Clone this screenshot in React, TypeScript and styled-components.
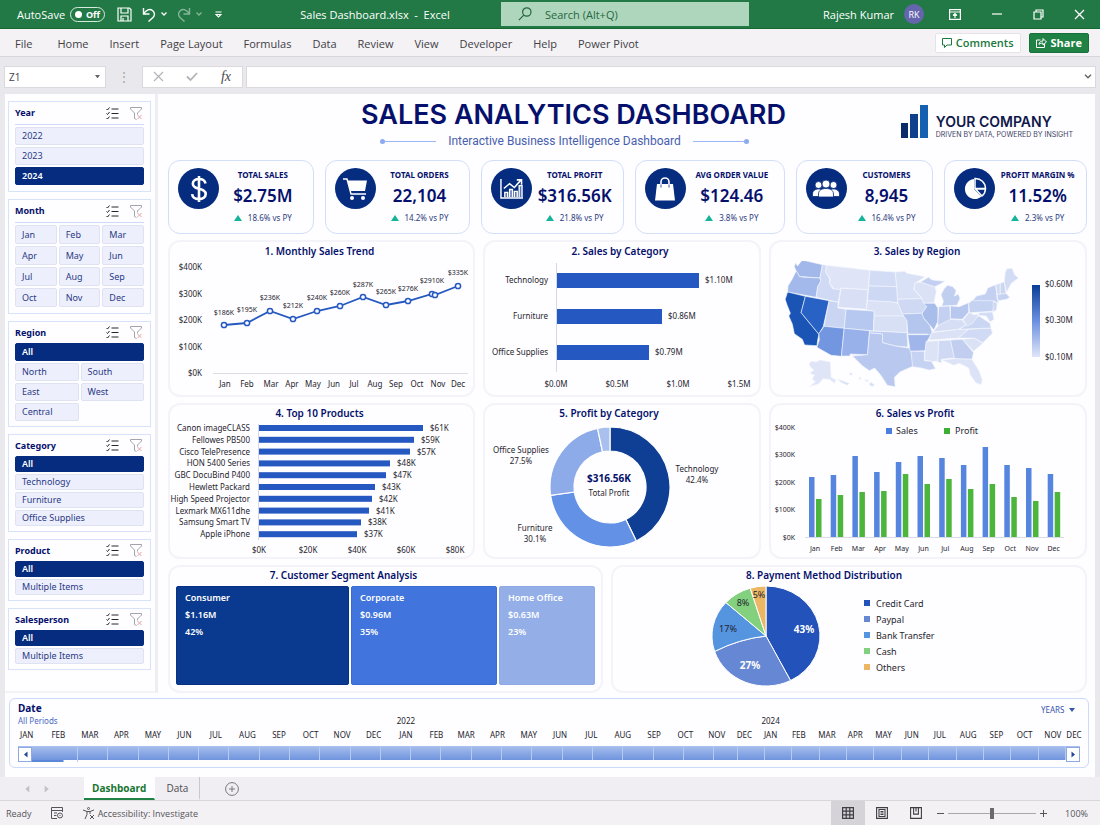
import React, { useState } from "react";
import styled, { createGlobalStyle } from "styled-components";

const uiFont = '"Open Sans", "Noto Sans", sans-serif';
const sheetFont = '"Noto Sans", "Open Sans", sans-serif';
const navy = "#04106b";
const deep = "#052c7e";
const blue = "#2558c0";

const Global = createGlobalStyle`
  * { box-sizing: border-box; }
  body { margin: 0; background: #e9e8ec; font-family: ${sheetFont}; color: #26262e; }
  button, input, select { font: inherit; color: inherit; margin: 0; }
  button { cursor: pointer; }
  svg { display: block; }
`;

const Window = styled.div`
  display: flex;
  flex-direction: column;
  min-height: 100vh;
  font-family: ${uiFont};
`;

/* ---------- title bar ---------- */

const TitleBar = styled.header`
  display: grid;
  grid-template-columns: 249fr 252fr 248fr 351fr;
  align-items: center;
  height: 29px;
  background: #227945;
  border-bottom: 1px solid #126a31;
  color: #fff;
  font-size: 11px;
`;

const QuickAccess = styled.div`
  display: flex;
  align-items: center;
  padding-left: 17px;
`;

const SwitchLabel = styled.label`
  display: flex;
  align-items: center;
  gap: 5px;
`;

const SwitchPill = styled.span`
  display: flex;
  align-items: center;
  justify-content: space-between;
  width: 35px;
  height: 15px;
  padding: 0 4px;
  border: 1px solid #d6ebdd;
  border-radius: 8px;
  font-size: 9px;
  font-weight: 700;
`;

const SwitchInput = styled.input`
  appearance: none;
  width: 7px;
  height: 7px;
  border-radius: 50%;
  background: #fff;
`;

const BarButton = styled.button<{ $gap?: number; $dim?: boolean }>`
  display: flex;
  padding: 0;
  margin-left: ${(p) => p.$gap ?? 0}px;
  border: 0;
  background: none;
  color: #fff;
  opacity: ${(p) => (p.$dim ? 0.45 : 1)};
`;

const FileName = styled.div`
  text-align: center;
  white-space: pre;
`;

const SearchBox = styled.label`
  display: flex;
  align-items: center;
  gap: 13px;
  height: 24px;
  padding-left: 17px;
  background: #aed6bc;
  color: #27663f;
`;

const SearchInput = styled.input`
  flex: 1;
  min-width: 0;
  padding: 0;
  border: 0;
  outline: 0;
  background: none;
  font-size: 11px;
  &::placeholder { color: #27663f; opacity: 1; }
`;

const WindowTools = styled.div`
  display: flex;
  align-items: center;
  justify-content: flex-end;
  padding-right: 15px;
`;

const Avatar = styled.span`
  display: flex;
  align-items: center;
  justify-content: center;
  width: 20px;
  height: 20px;
  margin-left: 10px;
  border-radius: 50%;
  background: #6565ae;
  font-size: 9px;
`;

/* ---------- ribbon and formula bar ---------- */

const Ribbon = styled.nav`
  display: flex;
  align-items: center;
  justify-content: space-between;
  height: 28px;
  padding: 0 11px 0 15px;
  background: #f4f2f5;
  border-bottom: 1px solid #d8d6da;
`;

const RibbonTabs = styled.div`
  display: flex;
  gap: 21px;
  padding-top: 2px;
`;

const RibbonTab = styled.button`
  padding: 0;
  border: 0;
  background: none;
  font-size: 11px;
  line-height: 16px;
  color: #414045;
  &:first-child { margin-right: 4px; }
`;

const RibbonActions = styled.div`
  display: flex;
  gap: 8px;
`;

const ActionButton = styled.button<{ $primary?: boolean }>`
  display: flex;
  align-items: center;
  gap: 4px;
  height: 20px;
  padding: 0 6px;
  border: 1px solid ${(p) => (p.$primary ? "#16713a" : "#e6e3e8")};
  border-radius: 2px;
  background: ${(p) => (p.$primary ? "#1f8144" : "#fff")};
  color: ${(p) => (p.$primary ? "#fff" : "#1a7a3c")};
  font-size: 11px;
  font-weight: ${(p) => (p.$primary ? 700 : 600)};
`;

const FormulaBar = styled.div`
  display: flex;
  align-items: center;
  height: 37px;
  padding: 2px 4px 0;
`;

const NameBox = styled.label`
  display: flex;
  align-items: center;
  width: 102px;
  height: 22px;
  padding: 0 5px 0 4px;
  border: 1px solid #dbd9de;
  background: #fff;
  color: #66656b;
`;

const NameInput = styled.input`
  flex: 1;
  min-width: 0;
  padding: 0;
  border: 0;
  outline: 0;
  background: none;
  font-size: 10px;
  color: #45444a;
`;

const Grip = styled.span`
  width: 36px;
  text-align: center;
  font-size: 12px;
  color: #a5a3a9;
`;

const FormulaTools = styled.div`
  display: flex;
  align-items: center;
  justify-content: space-between;
  width: 101px;
  height: 22px;
  padding: 0 11px 0 10px;
  border: 1px solid #dbd9de;
  background: #fff;
`;

const EntryButton = styled(BarButton)`
  color: #b4b2b8;
`;

const FxButton = styled(BarButton)`
  color: #4a494f;
  font-family: "Liberation Serif", serif;
  font-style: italic;
  font-size: 14px;
  line-height: 16px;
`;

const FormulaField = styled.label`
  display: flex;
  align-items: center;
  flex: 1;
  height: 22px;
  margin-left: 3px;
  padding-right: 3px;
  border: 1px solid #dbd9de;
  background: #fff;
  color: #66656b;
`;

/* ---------- sheet ---------- */

const Sheet = styled.main`
  flex: 1;
  margin: 0 5px;
  background: #fefdff;
  font-family: ${sheetFont};
`;

const SheetBody = styled.div`
  display: flex;
`;

const Slicers = styled.aside`
  display: flex;
  flex-direction: column;
  gap: 7px;
  flex: 0 0 153px;
  padding: 7px 4px 0 3px;
  border-right: 3px solid #eeedf2;
  border-bottom: 2px solid #f3f2f6;
`;

const SlicerCard = styled.section<{ $line?: boolean }>`
  padding: 0 6px ${(p) => (p.$line ? 6 : 5)}px;
  border: 1px solid #d9e2fb;
`;

const SlicerHead = styled.div<{ $line?: boolean }>`
  display: flex;
  align-items: center;
  gap: 11px;
  height: ${(p) => (p.$line ? 23 : 21)}px;
  margin-bottom: ${(p) => (p.$line ? 2 : 0)}px;
  padding-right: 2px;
  border-bottom: ${(p) => (p.$line ? "1px solid #cdd9f8" : "0")};
`;

const SlicerTitle = styled.h2`
  flex: 1;
  margin: 0;
  font-size: 9px;
  line-height: 14px;
  font-weight: 700;
  color: ${navy};
`;

const SlicerItems = styled.div<{ $cols: number }>`
  display: grid;
  grid-template-columns: repeat(${(p) => p.$cols}, 1fr);
  gap: 2px;
`;

const SlicerItem = styled.button<{ $on: boolean; $tall: number; $wide: boolean }>`
  height: ${(p) => p.$tall}px;
  grid-column: ${(p) => (p.$wide ? "1 / -1" : "auto")};
  padding: 0 0 0 6px;
  border: 1px solid ${(p) => (p.$on ? deep : "#dfe2f1")};
  border-radius: 2px;
  background: ${(p) => (p.$on ? deep : "#edf0fc")};
  color: ${(p) => (p.$on ? "#fff" : "#2b3a86")};
  font-size: 9px;
  line-height: 12px;
  font-weight: ${(p) => (p.$on ? 600 : 400)};
  text-align: left;
`;

const Dashboard = styled.div`
  flex: 1;
  min-width: 0;
  padding: 0 8px 0 10px;
`;

const DashHead = styled.div`
  display: flex;
  align-items: flex-start;
  justify-content: space-between;
  height: 66px;
  padding: 5px 14px 0 193px;
`;

const HeadTitles = styled.div`
  display: flex;
  flex-direction: column;
  align-items: center;
`;

const Title = styled.h1`
  margin: 0;
  font-family: Inter, ${sheetFont};
  font-size: 27px;
  line-height: 32px;
  font-weight: 600;
  color: ${navy};
  white-space: nowrap;
`;

const Subtitle = styled.p`
  display: flex;
  align-items: center;
  gap: 12px;
  margin: 2px 0 0;
  padding-right: 18px;
  font-family: Roboto, ${sheetFont};
  font-size: 12px;
  line-height: 16px;
  color: #4660ad;
  white-space: nowrap;
`;

const Flourish = styled.span<{ $end?: boolean }>`
  display: flex;
  flex-direction: ${(p) => (p.$end ? "row-reverse" : "row")};
  align-items: center;
  width: 56px;
  &::before { content: ""; width: 5px; height: 5px; border-radius: 50%; background: #8caaf0; }
  &::after { content: ""; flex: 1; height: 1px; background: #9bb6f4; }
`;

const Brand = styled.div`
  display: flex;
  gap: 8px;
  padding-top: 6px;
`;

const BrandName = styled.div`
  padding-top: 9px;
  font-family: Inter, ${sheetFont};
  font-size: 14px;
  line-height: 16px;
  font-weight: 600;
  color: #10184a;
  white-space: nowrap;
`;

const BrandLine = styled.div`
  font-size: 7px;
  line-height: 10px;
  font-weight: 400;
  color: #3b3f63;
`;

const KpiRow = styled.div`
  display: grid;
  grid-template-columns: 146fr 146fr 143fr 150fr 138fr 143fr;
  gap: 11px;
  margin-bottom: 6px;
`;

const KpiCard = styled.section`
  display: flex;
  height: 74px;
  padding: 7px 6px 0 9px;
  border: 1px solid #d3dff8;
  border-radius: 12px;
`;

const KpiIcon = styled.div`
  display: flex;
  align-items: center;
  justify-content: center;
  flex: 0 0 41px;
  height: 41px;
  border-radius: 50%;
  background: ${deep};
  color: #fff;
`;

const KpiText = styled.div`
  display: flex;
  flex-direction: column;
  align-items: center;
  flex: 1;
  white-space: nowrap;
`;

const KpiLabel = styled.h3`
  margin: 1px 0 0;
  font-size: 8px;
  line-height: 12px;
  font-weight: 700;
  color: ${navy};
`;

const KpiValue = styled.div`
  margin-top: 4px;
  font-size: 17px;
  line-height: 22px;
  font-weight: 600;
  color: ${navy};
`;

const KpiDelta = styled.div`
  display: flex;
  align-items: center;
  gap: 6px;
  margin-top: 5px;
  font-size: 8px;
  line-height: 12px;
  color: #2c3c80;
  &::before {
    content: "";
    border: 4px solid transparent;
    border-top: 0;
    border-bottom: 6px solid #14b39a;
  }
`;

const PanelRow = styled.div<{ $cols: string }>`
  display: grid;
  grid-template-columns: ${(p) => p.$cols};
  gap: 8px;
  margin-bottom: 6px;
  &:last-child { margin-bottom: 0; }
`;

const PanelBox = styled.section`
  min-width: 0;
  border: 2px solid #f4f3f9;
  border-radius: 12px;
`;

const PanelTitle = styled.h2<{ $tall: number; $shift: number }>`
  margin: 0;
  padding-right: ${(p) => p.$shift}px;
  font-size: 10px;
  line-height: ${(p) => p.$tall}px;
  font-weight: 600;
  color: ${navy};
  text-align: center;
`;

const Chart = styled.svg`
  width: 100%;
  height: auto;
  font-family: ${sheetFont};
`;

const Tiles = styled.div`
  display: grid;
  grid-template-columns: 173fr 146fr 96fr;
  gap: 2px;
  height: 99px;
  margin: 2px 6px 6px;
`;

const Tile = styled.div<{ $fill: string; $edge: string }>`
  padding: 2px 8px;
  border: 1px solid ${(p) => p.$edge};
  border-radius: 2px;
  background: ${(p) => p.$fill};
  color: #fff;
  font-size: 9px;
  line-height: 17px;
  font-weight: 600;
`;

const PieArea = styled.div`
  display: flex;
  align-items: center;
  gap: 43px;
  padding-left: 98px;
`;

const Pie = styled.svg`
  flex: 0 0 110px;
  height: 104px;
  font-family: ${sheetFont};
`;

const Legend = styled.ul`
  margin: 0;
  padding: 0 0 2px;
  list-style: none;
`;

const LegendItem = styled.li<{ $color: string }>`
  display: flex;
  align-items: center;
  gap: 6px;
  height: 16px;
  font-size: 9px;
  &::before { content: ""; width: 6px; height: 6px; background: ${(p) => p.$color}; }
`;

/* ---------- timeline ---------- */

const Timeline = styled.section`
  display: flex;
  flex-direction: column;
  height: 70px;
  margin: 5px 6px 9px 4px;
  padding: 3px 8px 0;
  border: 1px solid #cbdaf8;
  border-radius: 6px;
`;

const TimelineHead = styled.div`
  display: flex;
  justify-content: space-between;
  align-items: center;
  height: 12px;
  padding-right: 5px;
`;

const TimelineTitle = styled.h2`
  margin: 0;
  font-size: 10px;
  line-height: 12px;
  font-weight: 700;
  color: ${navy};
`;

const LevelPicker = styled.label`
  display: flex;
  align-items: center;
  gap: 4px;
  padding-top: 3px;
  color: #3655ae;
`;

const LevelSelect = styled.select`
  appearance: none;
  padding: 0;
  border: 0;
  background: none;
  font-size: 8px;
  line-height: 12px;
`;

const MonthGrid = styled.div`
  display: grid;
  grid-template-columns: repeat(12, 315fr) 330fr 280fr repeat(9, 313fr) 240fr repeat(11, 282fr) 140fr;
  margin: 0 -1px 0 -7px;
  font-size: 8px;
  line-height: 13px;
  color: #24242c;
`;

const Period = styled.span`
  grid-column: 1 / 4;
  padding-left: 7px;
  color: #4a6bc4;
`;

const Cell = styled.span<{ $col?: number }>`
  display: flex;
  justify-content: center;
  min-width: 0;
  ${(p) => (p.$col ? `grid-column: ${p.$col}; grid-row: 1;` : "")}
`;

const MonthRow = styled(MonthGrid)`
  margin-top: 1px;
`;

const Track = styled.div`
  display: flex;
  height: 16px;
  margin-top: 5px;
  border-top: 1px solid #a9c0ee;
`;

const TrackArrow = styled.button`
  display: flex;
  align-items: center;
  justify-content: center;
  width: 14px;
  padding: 0;
  border: 1px solid #8ea8e0;
  background: #fff;
  color: #2146a0;
`;

const TrackCells = styled.div`
  display: grid;
  grid-template-columns: 47fr repeat(21, 31fr) 24fr repeat(12, 28fr);
  flex: 1;
`;

const TrackCell = styled.span`
  height: 13px;
  border-right: 1px solid #b7caf1;
  background: linear-gradient(#a4bbec, #6f94dd);
  &:first-child {
    height: 15px;
    background:
      linear-gradient(#5c86d8, #5c86d8) left bottom / 70% 2px no-repeat,
      linear-gradient(#a4bbec, #6f94dd) top / 100% 13px no-repeat;
  }
`;

/* ---------- sheet tabs and status bar ---------- */

const TabBar = styled.nav`
  display: flex;
  height: 24px;
  border-bottom: 1px solid #d9d7db;
  background: #f0eef2;
  color: #56555b;
`;

const TabArrows = styled.div`
  display: flex;
  align-items: center;
  gap: 14px;
  width: 84px;
  padding-left: 24px;
  color: #c3c1c7;
`;

const SheetTab = styled.button<{ $on?: boolean }>`
  padding: 0 ${(p) => (p.$on ? 8 : 11)}px;
  border: 0;
  border-bottom: 2px solid ${(p) => (p.$on ? "#1f8144" : "transparent")};
  border-right: 1px solid ${(p) => (p.$on ? "transparent" : "#c9c7cc")};
  background: ${(p) => (p.$on ? "#fefdff" : "none")};
  color: ${(p) => (p.$on ? "#15752f" : "#4c4b51")};
  font-size: 10px;
  font-weight: ${(p) => (p.$on ? 700 : 400)};
`;

const AddButton = styled(BarButton)`
  align-items: center;
  color: #77767c;
`;

const StatusBar = styled.footer`
  display: flex;
  align-items: center;
  height: 24px;
  padding: 0 12px 0 6px;
  background: #f3f1f4;
  color: #55545a;
  font-size: 9px;
`;

const StatusGroup = styled.div<{ $gap: number }>`
  display: flex;
  align-items: center;
  gap: ${(p) => p.$gap}px;
`;

const Spacer = styled.div`
  flex: 1;
`;

const ViewButton = styled.button<{ $on?: boolean }>`
  display: flex;
  align-items: center;
  justify-content: center;
  width: 34px;
  height: 24px;
  padding: 0;
  border: 0;
  background: ${(p) => (p.$on ? "#d5d3d7" : "none")};
  color: #3f3e44;
`;

const ZoomGroup = styled(StatusGroup)`
  margin-left: 4px;
`;

const ZoomSlider = styled.input`
  appearance: none;
  width: 88px;
  height: 12px;
  background: linear-gradient(#a9a7ad, #a9a7ad) center / 100% 1px no-repeat;
  &::-webkit-slider-thumb {
    appearance: none;
    width: 4px;
    height: 11px;
    background: #6a696f;
  }
`;

const ZoomText = styled.span`
  margin-left: 18px;
`;

/* ---------- icons ---------- */

const Stroke = ({ w, h, d, sw = 1 }: { w: number; h: number; d: string; sw?: number }) => (
  <svg width={w} height={h} viewBox={`0 0 ${w} ${h}`} fill="none" stroke="currentColor" strokeWidth={sw} aria-hidden>
    <path d={d} />
  </svg>
);

const CaretDown = ({ size = 6 }: { size?: number }) => (
  <svg width={size} height={size / 2 + 1} viewBox="0 0 6 4" fill="currentColor" aria-hidden>
    <path d="M0 0h6L3 4z" />
  </svg>
);

const ArrowHead = ({ left, size = 5 }: { left?: boolean; size?: number }) => (
  <svg width={size} height={size + 2} viewBox="0 0 5 7" fill="currentColor" aria-hidden>
    <path d={left ? "M4.500 0.500v6L1 3.500z" : "M.5.5v6L4 3.500z"} />
  </svg>
);

const MultiIcon = () => (
  <Stroke w={13} h={13} d="M0.500 2l1 1 2-2.500M.5 6.500l1 1 2-2.500M.5 11l1 1 2-2.500M5.500 2h7M5.500 6.500h7M5.500 11h7" />
);

const ClearIcon = () => (
  <svg width="12" height="13" viewBox="0 0 12 13" fill="none" strokeWidth="1" aria-hidden>
    <path d="M.5.5h11v1.500L7.500 6v1.500M.5.5V2l4 4v5.500l2 1" stroke="#a4a3ab" />
    <path d="M7.500 8l4 4M11.500 8l-4 4" stroke="#e5a3a3" />
  </svg>
);

const kpiIcons: Record<string, React.ReactNode> = {
  dollar: (
    <svg width="20" height="30" viewBox="0 0 20 30" fill="none" stroke="currentColor" strokeWidth="2.600" aria-hidden>
      <path d="M16.500 9.500C16 6.500 13.500 5 10 5S3.800 6.700 3.800 9.700c0 6.800 12.900 3.500 12.900 10.400 0 3.200-2.900 5-6.700 5s-6.500-1.800-6.900-5M10 2v26" />
    </svg>
  ),
  cart: (
    <svg width="26" height="24" viewBox="0 0 26 24" aria-hidden>
      <path d="M1 2h4l4 15h15" fill="none" stroke="currentColor" strokeWidth="1.400" />
      <path d="M5.500 3.500H25L23 14H8.500z" fill="currentColor" />
      <circle cx="10" cy="21" r="2" fill="currentColor" />
      <circle cx="21" cy="21" r="2" fill="currentColor" />
    </svg>
  ),
  chart: (
    <svg width="25" height="23" viewBox="0 0 26 24" fill="none" stroke="currentColor" aria-hidden>
      <path d="M2 2v20h23" strokeWidth="1.500" />
      <path d="M6 21v-5h3v5M11 21v-8h3v8M16 21v-6h3v6M21 21V9h3v12" strokeWidth="1.400" fill="currentColor" fillOpacity="0.350" />
      <path d="M5 12l6-5 5 4 7-8M18.500 3H23.500v5" strokeWidth="1.600" />
    </svg>
  ),
  bag: (
    <svg width="22" height="26" viewBox="0 0 22 26" aria-hidden>
      <path d="M3 8h16l2 16.500H1z" fill="currentColor" />
      <path d="M7 9V6a4 4 0 0 1 8 0v3" fill="none" stroke="currentColor" strokeWidth="1.600" />
      <path d="M7 8.500v3M15 8.500v3" stroke={deep} strokeWidth="0.800" />
    </svg>
  ),
  people: (
    <svg width="28" height="20" viewBox="0 0 28 20" fill="currentColor" stroke={deep} strokeWidth="0.800" aria-hidden>
      <circle cx="6.500" cy="6" r="3.500" />
      <circle cx="21.500" cy="6" r="3.500" />
      <path d="M.5 17.500v-2.500c0-3 2.500-5 6-5s6 2 6 5v2.500zM15.500 17.500v-2.500c0-3 2.500-5 6-5s6 2 6 5v2.500z" />
      <circle cx="14" cy="5" r="4" />
      <path d="M6.500 18v-3c0-3.500 3-5.500 7.500-5.500s7.500 2 7.500 5.500v3z" />
    </svg>
  ),
  pie: (
    <svg width="24" height="24" viewBox="0 0 24 24" aria-hidden>
      <path d="M11 2a10 10 0 1 0 7.500 17.500L11 12z" fill="currentColor" />
      <path d="M12 1.500a10 10 0 0 1 10.500 10H12zM12.500 12h10a10 10 0 0 1-3.500 7z" fill={deep} stroke="currentColor" strokeWidth="1.500" />
    </svg>
  ),
};

/* ---------- data ---------- */

const months = ["Jan", "Feb", "Mar", "Apr", "May", "Jun", "Jul", "Aug", "Sep", "Oct", "Nov", "Dec"];

const slicers = [
  { name: "Year", items: ["2022", "2023", "2024"], on: "2024", cols: 1, tall: 18, line: true },
  { name: "Month", items: months, on: "", cols: 3, tall: 19, line: true },
  { name: "Region", items: ["All", "North", "South", "East", "West", "Central"], on: "All", cols: 2, tall: 18 },
  { name: "Category", items: ["All", "Technology", "Furniture", "Office Supplies"], on: "All", cols: 1, tall: 16 },
  { name: "Product", items: ["All", "Multiple Items"], on: "All", cols: 1, tall: 16 },
  { name: "Salesperson", items: ["All", "Multiple Items"], on: "All", cols: 1, tall: 16 },
];

const kpis = [
  { icon: "dollar", label: "TOTAL SALES", value: "$2.75M", delta: "18.6% vs PY" },
  { icon: "cart", label: "TOTAL ORDERS", value: "22,104", delta: "14.2% vs PY" },
  { icon: "chart", label: "TOTAL PROFIT", value: "$316.56K", delta: "21.8% vs PY" },
  { icon: "bag", label: "AVG ORDER VALUE", value: "$124.46", delta: "3.8% vs PY" },
  { icon: "people", label: "CUSTOMERS", value: "8,945", delta: "16.4% vs PY" },
  { icon: "pie", label: "PROFIT MARGIN %", value: "11.52%", delta: "2.3% vs PY" },
];

const trendMonthX = [55, 77, 101, 122, 143, 164, 184, 205, 226, 247, 268, 288];

const trend = [
  { x: 54, y: 64, label: "$186K", ly: 54 },
  { x: 77, y: 62, label: "$195K", ly: 51 },
  { x: 100, y: 50, label: "$236K", ly: 39 },
  { x: 123, y: 58, label: "$212K", ly: 47 },
  { x: 147, y: 50, label: "$240K", ly: 39 },
  { x: 170, y: 45, label: "$260K", ly: 34 },
  { x: 193, y: 36, label: "$287K", ly: 26 },
  { x: 216, y: 44, label: "$265K", ly: 33 },
  { x: 238, y: 40, label: "$276K", ly: 30 },
  { x: 262, y: 33, label: "$2910K", ly: 22 },
  { x: 265, y: 34 },
  { x: 288, y: 25, label: "$335K", ly: 14 },
];

const categories = [
  { name: "Technology", value: "$1.10M", w: 142 },
  { name: "Furniture", value: "$0.86M", w: 105 },
  { name: "Office Supplies", value: "$0.79M", w: 92 },
];

const products = [
  { name: "Canon imageCLASS", value: "$61K", w: 164 },
  { name: "Fellowes PB500", value: "$59K", w: 155 },
  { name: "Cisco TelePresence", value: "$57K", w: 151 },
  { name: "HON 5400 Series", value: "$48K", w: 131 },
  { name: "GBC DocuBind P400", value: "$47K", w: 127 },
  { name: "Hewlett Packard", value: "$43K", w: 116 },
  { name: "High Speed Projector", value: "$42K", w: 113 },
  { name: "Lexmark MX611dhe", value: "$41K", w: 110 },
  { name: "Samsung Smart TV", value: "$38K", w: 102 },
  { name: "Apple iPhone", value: "$37K", w: 98 },
];

const sales = [60, 62, 81, 65, 75, 81, 79, 72, 90, 72, 69, 63];
const profit = [38, 42, 45, 46, 63, 53, 58, 48, 53, 40, 36, 45];

const segments = [
  { name: "Consumer", value: "$1.16M", share: "42%", fill: "#0a3a8f", edge: "#083183" },
  { name: "Corporate", value: "$0.96M", share: "35%", fill: "#4174dc", edge: "#3a6bd2" },
  { name: "Home Office", value: "$0.63M", share: "23%", fill: "#94aee8", edge: "#8ea9e6" },
];

const payments = [
  { name: "Credit Card", color: "#2353ba" },
  { name: "Paypal", color: "#6688d4" },
  { name: "Bank Transfer", color: "#5594df" },
  { name: "Cash", color: "#83d07f" },
  { name: "Others", color: "#ecb765" },
];

/* Outlines of the states: fill, then x,y pairs on the map's own grid. */
const states: [string, string][] = [
  ["#a3b8ea", "798,80 803,90 815,72 866,86 860,126 818,122 808,122 800,106 795,92"],
  ["#a3b9eb", "800,104 808,122 820,124 860,126 862,136 854,152 850,184 778,168 779,150 790,128"],
  ["#1a55b5", "778,168 823,181 812,230 857,295 854,312 852,329 821,327 815,310 795,293 790,265 781,240 785,232 776,205 772,190"],
  ["#2862c4", "823,181 883,194 868,272 863,282 857,295 812,230"],
  ["#d0daf4", "866,86 876,88 874,108 884,128 884,142 892,158 912,160 906,199 850,184 854,152 862,136 860,126"],
  ["#dfe5f7", "876,88 986,103 981,161 912,156 911,161 895,158 884,142 886,130 874,108"],
  ["#d9e0f5", "913,157 981,161 977,220 906,214"],
  ["#c9d5f3", "883,194 906,199 905,216 926,220 921,277 870,271"],
  ["#b7c8f0", "926,220 997,225 995,285 921,277"],
  ["#7396e0", "870,271 921,277 914,361 888,358 852,334 858,312 857,292 864,282"],
  ["#98b1ea", "921,277 985,284 980,356 936,354 936,360 914,360"],
  ["#d3dcf5", "986,103 1050,108 1054,152 983,150"],
  ["#cdd8f4", "983,150 1054,152 1056,192 1056,200 980,194"],
  ["#dbe2f6", "980,194 1040,197 1058,202 1070,240 997,240 997,225 977,222"],
  ["#d8e0f6", "997,240 1070,240 1080,252 1080,290 995,285"],
  ["#bccbf0", "985,285 1080,290 1082,333 1050,330 1018,320 1018,294 985,291"],
  ["#b9c8ee", "985,291 1018,294 1018,320 1050,330 1088,337 1092,360 1096,390 1062,408 1048,424 1050,452 1030,448 1014,418 998,396 985,404 968,390 942,360 980,356"],
  ["#d9e1f6", "1050,108 1074,106 1080,112 1126,122 1100,142 1097,160 1118,188 1056,190 1054,152"],
  ["#cfd9f4", "1056,190 1118,188 1130,212 1118,232 1068,234 1058,204"],
  ["#b5c6ee", "1068,234 1118,232 1124,250 1138,268 1144,290 1140,300 1132,300 1132,294 1082,294 1080,254"],
  ["#a0b5e9", "1082,296 1140,296 1130,318 1126,344 1088,346"],
  ["#c6d2f1", "1090,346 1124,346 1124,374 1142,376 1152,398 1136,402 1116,396 1094,392"],
  ["#dbe2f6", "1100,142 1114,138 1150,152 1154,165 1148,200 1122,202 1116,184 1098,160"],
  ["#a9bdeb", "1122,202 1150,202 1158,216 1158,256 1148,282 1138,268 1122,246 1118,232 1130,212"],
  ["#c3d0f1", "1114,138 1134,124 1144,132 1176,136 1164,144 1150,152"],
  ["#c0cef0", "1182,148 1196,152 1204,164 1200,180 1210,174 1214,188 1206,208 1168,210 1172,196 1166,176 1174,158"],
  ["#c4d0f1", "1160,212 1188,210 1190,252 1158,270 1158,256"],
  ["#b8c7ee", "1190,210 1212,212 1236,200 1236,228 1220,250 1190,248"],
  ["#d6def5", "1148,284 1160,268 1190,250 1220,252 1230,268 1210,280 1146,288"],
  ["#dbe2f6", "1142,290 1210,280 1236,280 1210,306 1136,312"],
  ["#dce3f7", "1128,316 1160,314 1158,376 1142,376 1124,372 1126,344"],
  ["#cfd9f4", "1160,314 1190,312 1200,366 1166,370 1168,380 1158,378"],
  ["#c1cef0", "1190,312 1220,310 1248,350 1244,370 1200,368"],
  ["#dce3f7", "1168,372 1200,368 1244,370 1262,404 1270,430 1268,446 1254,440 1240,416 1236,396 1212,382 1198,388 1180,378"],
  ["#dbe2f6", "1220,310 1250,306 1272,322 1248,346"],
  ["#d0daf4", "1210,306 1236,280 1292,276 1296,292 1272,320 1250,306"],
  ["#cbd6f3", "1212,280 1232,266 1250,246 1262,240 1290,262 1292,276"],
  ["#d7dff5", "1222,252 1238,228 1248,236 1262,234 1246,262 1232,270"],
  ["#c6d2f1", "1236,202 1246,192 1296,192 1304,206 1296,226 1238,230"],
  ["#c3d0f1", "1246,194 1256,180 1278,174 1284,156 1304,146 1308,190 1312,202 1298,194"],
  ["#d3dcf5", "1262,230 1296,228 1300,250 1290,258 1280,240 1262,238"],
  ["#cdd8f4", "1298,196 1308,202 1306,222 1298,228"],
  ["#d3dcf5", "1304,146 1316,142 1316,176 1308,176"],
  ["#cbd6f3", "1316,142 1326,138 1330,172 1316,176"],
  ["#d3dcf5", "1326,138 1328,112 1332,98 1346,97 1352,116 1362,126 1344,142 1332,168"],
  ["#c6d2f1", "1308,176 1330,172 1340,184 1332,190 1310,194"],
  ["#dfe5f7", "832,384 838,376 850,378 860,372 886,378 888,424 900,432 896,442 884,430 868,428 856,444 832,452 848,438 840,428 846,418 834,412 844,402 836,394"],
  ["#d9e0f5", "904,428 920,436 934,442 930,448 914,440"],
  ["#d9e0f5", "936,410 942,412 940,418 934,416"],
  ["#d9e0f5", "958,422 966,428 960,430"],
  ["#d9e0f5", "972,430 984,434 978,438"],
  ["#d9e0f5", "988,438 998,446 992,452 984,446"],
];

const project = (points: string) =>
  points
    .split(" ")
    .map((pair) => {
      const [x, y] = pair.split(",").map(Number);
      return `${(x * 0.3954 - 291).toFixed(1)},${(y / 3 - 25).toFixed(1)}`;
    })
    .join(" ");

/* Point on an ellipse at an angle in degrees, clockwise from the top. */
const onEllipse = (cx: number, cy: number, rx: number, ry: number, deg: number) => {
  const a = (deg * Math.PI) / 180;
  return `${(cx + rx * Math.sin(a)).toFixed(2)} ${(cy - ry * Math.cos(a)).toFixed(2)}`;
};

const ringSlice = (cx: number, cy: number, r: number, inner: number, from: number, to: number) => {
  const large = to - from > 180 ? 1 : 0;
  return (
    `M${onEllipse(cx, cy, r, r, from)}A${r} ${r} 0 ${large} 1 ${onEllipse(cx, cy, r, r, to)}` +
    `L${onEllipse(cx, cy, inner, inner, to)}A${inner} ${inner} 0 ${large} 0 ${onEllipse(cx, cy, inner, inner, from)}Z`
  );
};

/* ---------- panels ---------- */

type PanelProps = { title: string; tall: number; shift?: number; children: React.ReactNode };

const Panel = ({ title, tall, shift = 0, children }: PanelProps) => (
  <PanelBox>
    <PanelTitle $tall={tall} $shift={shift}>{title}</PanelTitle>
    {children}
  </PanelBox>
);

const TrendChart = () => (
  <Chart viewBox="0 0 303 134" role="img" aria-label="Monthly sales trend" fontSize="8" fill="#26262e">
    {["$400K", "$300K", "$200K", "$100K", "$0K"].map((t, i) => (
      <text key={t} x="32" y={9 + i * 26.5} textAnchor="end">{t}</text>
    ))}
    <path d="M43 112.500H298" stroke="#dcdce6" />
    {months.map((m, i) => (
      <text key={m} x={trendMonthX[i]} y="126" textAnchor="middle">{m}</text>
    ))}
    <polyline points={trend.map((p) => `${p.x},${p.y}`).join(" ")} fill="none" stroke={blue} strokeWidth="1.800" />
    {trend.map((p) => (
      <g key={p.x}>
        <circle cx={p.x} cy={p.y} r="2.600" fill="#fff" stroke={blue} strokeWidth="1.500" />
        {p.label && <text x={p.x} y={p.ly} fontSize="7" textAnchor="middle">{p.label}</text>}
      </g>
    ))}
  </Chart>
);

const CategoryChart = () => (
  <Chart viewBox="0 0 274 134" role="img" aria-label="Sales by category" fontSize="8" fill="#26262e">
    <path d="M71.500 2v109" stroke="#d3d8ea" />
    {categories.map((c, i) => (
      <g key={c.name}>
        <text x="63" y={22 + i * 36} textAnchor="end">{c.name}</text>
        <rect x="72" y={12 + i * 36} width={c.w} height="15" fill={blue} />
        <text x={78 + c.w} y={22 + i * 36}>{c.value}</text>
      </g>
    ))}
    {["$0.0M", "$0.5M", "$1.0M", "$1.5M"].map((t, i) => (
      <text key={t} x={71 + i * 61} y="126" textAnchor="middle">{t}</text>
    ))}
  </Chart>
);

const RegionMap = () => (
  <Chart viewBox="0 0 314 134" role="img" aria-label="Sales by region" fontSize="8" fill="#26262e">
    <defs>
      <linearGradient id="scale" x1="0" y1="0" x2="0" y2="1">
        <stop offset="0" stopColor="#0b3e96" />
        <stop offset="0.500" stopColor="#6b8fe0" />
        <stop offset="1" stopColor="#dfe6f9" />
      </linearGradient>
    </defs>
    {states.map(([fill, points], i) => (
      <polygon key={i} points={project(points)} fill={fill} stroke="#f3f6fd" strokeWidth="0.600" strokeLinejoin="round" />
    ))}
    <rect x="261" y="24" width="8" height="72" fill="url(#scale)" />
    <text x="274" y="26">$0.60M</text>
    <text x="274" y="62">$0.30M</text>
    <text x="274" y="99">$0.10M</text>
  </Chart>
);

const ProductChart = () => (
  <Chart viewBox="0 0 303 136" role="img" aria-label="Top 10 products" fontSize="8" fill="#26262e">
    <path d="M88.500 3v116" stroke="#d3d8ea" />
    {products.map((p, i) => (
      <g key={p.name}>
        <text x="80" y={10 + i * 11.800} textAnchor="end">{p.name}</text>
        <rect x="89" y={4 + i * 11.800} width={p.w} height="6" fill={blue} />
        <text x={96 + p.w} y={10 + i * 11.800}>{p.value}</text>
      </g>
    ))}
    {["$0K", "$20K", "$40K", "$60K", "$80K"].map((t, i) => (
      <text key={t} x={89 + i * 49} y="132" textAnchor="middle">{t}</text>
    ))}
  </Chart>
);

const DonutChart = () => (
  <Chart viewBox="0 0 274 136" role="img" aria-label="Profit by category" fontSize="8" fill="#26262e" textAnchor="middle">
    <g stroke="#fff" strokeWidth="1.200">
      <path d={ringSlice(125, 66, 60, 36, 0, 154)} fill="#0e3f94" />
      <path d={ringSlice(125, 66, 60, 36, 154, 262)} fill="#6391e6" />
      <path d={ringSlice(125, 66, 60, 36, 262, 348)} fill="#8eabe9" />
      <path d={ringSlice(125, 66, 60, 36, 348, 360)} fill="#a9c0ee" />
    </g>
    <text x="124" y="61" fontSize="10" fontWeight="700" fill={navy}>$316.56K</text>
    <text x="124" y="75">Total Profit</text>
    <text x="212" y="51">Technology</text>
    <text x="212" y="62">42.4%</text>
    <text x="36" y="32">Office Supplies</text>
    <text x="36" y="43">27.5%</text>
    <text x="50" y="110">Furniture</text>
    <text x="50" y="121">30.1%</text>
  </Chart>
);

const ProfitChart = () => (
  <Chart viewBox="0 0 314 136" role="img" aria-label="Sales vs profit" fontSize="7" fill="#26262e">
    {["$400K", "$300K", "$200K", "$100K", "$0K"].map((t, i) => (
      <text key={t} x="24" y={9 + i * 27.400} textAnchor="end">{t}</text>
    ))}
    <path d="M34 116.500H293" stroke="#d9dbe6" />
    {months.map((m, i) => (
      <g key={m}>
        <rect x={38 + i * 21.700} y={116 - sales[i]} width="5.500" height={sales[i]} fill="#5585de" />
        <rect x={45 + i * 21.700} y={116 - profit[i]} width="5.500" height={profit[i]} fill="#4bb53c" />
        <text x={44 + i * 21.700} y="130" textAnchor="middle">{m}</text>
      </g>
    ))}
    <g fontSize="9">
      <rect x="115" y="7" width="6" height="6" fill="#4a7fe0" />
      <text x="125" y="13">Sales</text>
      <rect x="173" y="7" width="6" height="6" fill="#3fae34" />
      <text x="184" y="13">Profit</text>
    </g>
  </Chart>
);

const pieEdges = [0, 153, 252, 312, 343, 360];

const PaymentPie = () => (
  <Pie viewBox="0 0 110 104" role="img" aria-label="Payment method distribution" fontSize="9" textAnchor="middle">
    <g stroke="#fff" strokeWidth="1">
      {payments.map((p, i) => {
        const from = onEllipse(55, 52, 54, 50, pieEdges[i]);
        const to = onEllipse(55, 52, 54, 50, pieEdges[i + 1]);
        const start = i === 2 ? `M55 52Q28 55 ${from}` : `M55 52L${from}`;
        const end = i === 1 ? "Q28 55 55 52" : "Z";
        return <path key={p.name} d={`${start}A54 50 0 0 1 ${to}${end}`} fill={p.color} />;
      })}
    </g>
    <g fontSize="10" fontWeight="700" fill="#fff">
      <text x="93" y="49">43%</text>
      <text x="39" y="85">27%</text>
    </g>
    <g fill="#1e2430">
      <text x="17" y="48">17%</text>
      <text x="32" y="22">8%</text>
      <text x="48" y="14">5%</text>
    </g>
  </Pie>
);

const Slicer = ({ name, items, on, cols, tall, line }: (typeof slicers)[number]) => {
  const [picked, setPicked] = useState(on);
  return (
    <SlicerCard $line={line}>
      <SlicerHead $line={line}>
        <SlicerTitle>{name}</SlicerTitle>
        <MultiIcon />
        <ClearIcon />
      </SlicerHead>
      <SlicerItems $cols={cols}>
        {items.map((item) => (
          <SlicerItem
            key={item}
            $on={item === picked}
            $tall={tall}
            $wide={item === "All"}
            aria-pressed={item === picked}
            onClick={() => setPicked(item)}
          >
            {item}
          </SlicerItem>
        ))}
      </SlicerItems>
    </SlicerCard>
  );
};

const timelineMonths = [0, 1, 2].flatMap(() => months.map((m) => m.toUpperCase()));

export default function App() {
  return (
    <Window>
      <Global />
      <TitleBar>
        <QuickAccess>
          <SwitchLabel>
            AutoSave
            <SwitchPill>
              <SwitchInput type="checkbox" />
              Off
            </SwitchPill>
          </SwitchLabel>
          <BarButton $gap={12} aria-label="Save">
            <Stroke w={15} h={15} sw={1.2} d="M1 1h11.500L14 2.500V14H1zM4 1v5h7V1M4 14V9h7v5M6 14v-3" />
          </BarButton>
          <BarButton $gap={10} aria-label="Undo">
            <Stroke w={14} h={15} sw={1.4} d="M1.500 1v6h6M1.500 7C4 2.500 8 1.500 10.500 3.500s2.500 5 .5 7L6.500 14.500" />
          </BarButton>
          <BarButton $gap={5} aria-label="Undo list"><Stroke w={6} h={4} sw={1.3} d="M.5.5L3 3 5.500.5" /></BarButton>
          <BarButton $gap={10} $dim aria-label="Redo">
            <Stroke w={14} h={15} sw={1.4} d="M12.500 1v6h-6M12.500 7C10 2.500 6 1.500 3.500 3.500s-2.500 5-.5 7L7.500 14.500" />
          </BarButton>
          <BarButton $gap={5} $dim aria-label="Redo list"><Stroke w={6} h={4} sw={1.3} d="M.5.5L3 3 5.500.5" /></BarButton>
          <BarButton $gap={13} aria-label="Customize toolbar"><Stroke w={7} h={7} sw={1.2} d="M.5 1h6M1 3.500h5L3.500 6z" /></BarButton>
        </QuickAccess>
        <FileName>{"Sales Dashboard.xlsx  -  Excel"}</FileName>
        <SearchBox>
          <Stroke w={14} h={14} sw={1.2} d="M13 5A4.200 4.200 0 1 1 4.600 5 4.200 4.200 0 0 1 13 5zM5.800 8.200L.8 13.200" />
          <SearchInput placeholder="Search (Alt+Q)" aria-label="Search" />
        </SearchBox>
        <WindowTools>
          Rajesh Kumar
          <Avatar>RK</Avatar>
          <BarButton $gap={25} aria-label="Ribbon display"><Stroke w={12} h={11} sw={1.2} d="M.6.6h10.800v9.800H.6zM.6 3h10.800M6 9V4.500M4 6.500l2-2 2 2" /></BarButton>
          <BarButton $gap={31} aria-label="Minimize"><Stroke w={10} h={10} sw={1.2} d="M0 5h10" /></BarButton>
          <BarButton $gap={31} aria-label="Restore"><Stroke w={11} h={11} sw={1.2} d="M1 3h7v7H1zM3 3V1h7v7H8" /></BarButton>
          <BarButton $gap={30} aria-label="Close"><Stroke w={11} h={11} sw={1.3} d="M1 1l9 9M10 1l-9 9" /></BarButton>
        </WindowTools>
      </TitleBar>

      <Ribbon>
        <RibbonTabs>
          {["File", "Home", "Insert", "Page Layout", "Formulas", "Data", "Review", "View", "Developer", "Help", "Power Pivot"].map((t) => (
            <RibbonTab key={t}>{t}</RibbonTab>
          ))}
        </RibbonTabs>
        <RibbonActions>
          <ActionButton>
            <Stroke w={10} h={10} d="M.5.5h9v6.500H5L2.500 9.500V7h-2z" />
            Comments
          </ActionButton>
          <ActionButton $primary>
            <Stroke w={11} h={11} d="M4.500 3H.5v7.500h8V7M3 7.500C3 5 5 4 7 4V1.500L10.500 5 7 8V6C5.500 6 4 6.500 3 7.500z" />
            Share
          </ActionButton>
        </RibbonActions>
      </Ribbon>

      <FormulaBar>
        <NameBox>
          <NameInput defaultValue="Z1" aria-label="Name box" />
          <CaretDown size={5} />
        </NameBox>
        <Grip>⋮</Grip>
        <FormulaTools>
          <EntryButton aria-label="Cancel entry"><Stroke w={11} h={11} sw={1.2} d="M1 1l9 9M10 1l-9 9" /></EntryButton>
          <EntryButton aria-label="Confirm entry"><Stroke w={12} h={9} sw={1.8} d="M1 4.500L4.500 8 11 1" /></EntryButton>
          <FxButton aria-label="Insert function">fx</FxButton>
        </FormulaTools>
        <FormulaField>
          <NameInput aria-label="Formula" />
          <Stroke w={8} h={5} sw={1.5} d="M1 .8L4 3.800 7 .8" />
        </FormulaField>
      </FormulaBar>

      <Sheet>
        <SheetBody>
          <Slicers>
            {slicers.map((s) => (
              <Slicer key={s.name} {...s} />
            ))}
          </Slicers>
          <Dashboard>
            <DashHead>
              <HeadTitles>
                <Title>SALES ANALYTICS DASHBOARD</Title>
                <Subtitle>
                  <Flourish />
                  Interactive Business Intelligence Dashboard
                  <Flourish $end />
                </Subtitle>
              </HeadTitles>
              <Brand>
                <svg width="27" height="33" viewBox="0 0 27 33" aria-hidden>
                  <rect x="0" y="18" width="7" height="15" fill="#0b2c6b" />
                  <rect x="9" y="9" width="8" height="24" fill="#0f3f8d" />
                  <rect x="19" y="0" width="8" height="33" fill="#1560b0" />
                </svg>
                <BrandName>
                  YOUR COMPANY
                  <BrandLine>DRIVEN BY DATA, POWERED BY INSIGHT</BrandLine>
                </BrandName>
              </Brand>
            </DashHead>

            <KpiRow>
              {kpis.map((k) => (
                <KpiCard key={k.label}>
                  <KpiIcon>{kpiIcons[k.icon]}</KpiIcon>
                  <KpiText>
                    <KpiLabel>{k.label}</KpiLabel>
                    <KpiValue>{k.value}</KpiValue>
                    <KpiDelta>{k.delta}</KpiDelta>
                  </KpiText>
                </KpiCard>
              ))}
            </KpiRow>

            <PanelRow $cols="307fr 278fr 318fr">
              <Panel title="1. Monthly Sales Trend" tall={19} shift={4}><TrendChart /></Panel>
              <Panel title="2. Sales by Category" tall={19} shift={4}><CategoryChart /></Panel>
              <Panel title="3. Sales by Region" tall={19} shift={22}><RegionMap /></Panel>
            </PanelRow>
            <PanelRow $cols="307fr 278fr 318fr">
              <Panel title="4. Top 10 Products" tall={16} shift={4}><ProductChart /></Panel>
              <Panel title="5. Profit by Category" tall={16} shift={26}><DonutChart /></Panel>
              <Panel title="6. Sales vs Profit" tall={16} shift={26}><ProfitChart /></Panel>
            </PanelRow>
            <PanelRow $cols="435fr 476fr">
              <Panel title="7. Customer Segment Analysis" tall={17} shift={84}>
                <Tiles>
                  {segments.map((s) => (
                    <Tile key={s.name} $fill={s.fill} $edge={s.edge}>
                      <div>{s.name}</div>
                      <div>{s.value}</div>
                      <div>{s.share}</div>
                    </Tile>
                  ))}
                </Tiles>
              </Panel>
              <Panel title="8. Payment Method Distribution" tall={17} shift={50}>
                <PieArea>
                  <PaymentPie />
                  <Legend>
                    {payments.map((p) => (
                      <LegendItem key={p.name} $color={p.color}>{p.name}</LegendItem>
                    ))}
                  </Legend>
                </PieArea>
              </Panel>
            </PanelRow>
          </Dashboard>
        </SheetBody>

        <Timeline>
          <TimelineHead>
            <TimelineTitle>Date</TimelineTitle>
            <LevelPicker>
              <LevelSelect aria-label="Time level">
                <option>YEARS</option>
                <option>DAYS</option>
              </LevelSelect>
              <CaretDown />
            </LevelPicker>
          </TimelineHead>
          <MonthGrid>
            <Period>All Periods</Period>
            <Cell $col={13}>2022</Cell>
            <Cell $col={25}>2024</Cell>
          </MonthGrid>
          <MonthRow>
            {timelineMonths.map((m, i) => (
              <Cell key={i}>{m}</Cell>
            ))}
          </MonthRow>
          <Track>
            <TrackArrow aria-label="Scroll left"><ArrowHead left /></TrackArrow>
            <TrackCells>
              {Array.from({ length: 35 }, (_, i) => (
                <TrackCell key={i} />
              ))}
            </TrackCells>
            <TrackArrow aria-label="Scroll right"><ArrowHead /></TrackArrow>
          </Track>
        </Timeline>
      </Sheet>

      <TabBar>
        <TabArrows>
          <ArrowHead left size={6} />
          <ArrowHead size={6} />
        </TabArrows>
        <SheetTab $on>Dashboard</SheetTab>
        <SheetTab>Data</SheetTab>
        <AddButton $gap={25} aria-label="New sheet">
          <svg width="14" height="14" viewBox="0 0 14 14" fill="none" stroke="currentColor" aria-hidden>
            <circle cx="7" cy="7" r="6.400" />
            <path d="M7 4v6M4 7h6" />
          </svg>
        </AddButton>
      </TabBar>
      <StatusBar>
        <StatusGroup $gap={19}>
          Ready
          <Stroke w={12} h={12} d="M11.500 5V.5H.5v11H6M.5 3.500h11M3 6h3M3 8.500h2.500M11.500 8.500a2.500 2.500 0 1 1-5 0 2.500 2.500 0 0 1 5 0zM8.500 8.500h1" />
          <StatusGroup $gap={3}>
            <Stroke w={13} h={13} d="M5.500 1.500a1 1 0 1 1 2 0 1 1 0 0 1-2 0zM1 3l4 1.500v3L3 12M12 3L8 4.500V7M5 4.500h3M8 8l4 4M12 8l-4 4" />
            Accessibility: Investigate
          </StatusGroup>
        </StatusGroup>
        <Spacer />
        <ViewButton $on aria-label="Normal view">
          <Stroke w={12} h={12} sw={1.2} d="M.6.6h10.800v10.800H.6zM.6 4.200h10.800M.6 7.800h10.800M4.200.6v10.800M7.800.6v10.800" />
        </ViewButton>
        <ViewButton aria-label="Page layout view">
          <Stroke w={12} h={12} sw={1.1} d="M.6.6h10.800v10.800H.6zM3 2.500h6v7H3zM4.500 4.500h3M4.500 6h3M4.500 7.500h3" />
        </ViewButton>
        <ViewButton aria-label="Page break view">
          <Stroke w={12} h={12} sw={1.1} d="M.6.6h10.800v10.800H.6zM3.600.6v6.500h4.800V.6M6 .6v4" />
        </ViewButton>
        <ZoomGroup $gap={4}>
          <Stroke w={7} h={7} d="M0 3.500h7" />
          <ZoomSlider type="range" aria-label="Zoom" defaultValue={50} />
          <Stroke w={7} h={7} d="M0 3.500h7M3.500 0v7" />
        </ZoomGroup>
        <ZoomText>100%</ZoomText>
      </StatusBar>
    </Window>
  );
}
